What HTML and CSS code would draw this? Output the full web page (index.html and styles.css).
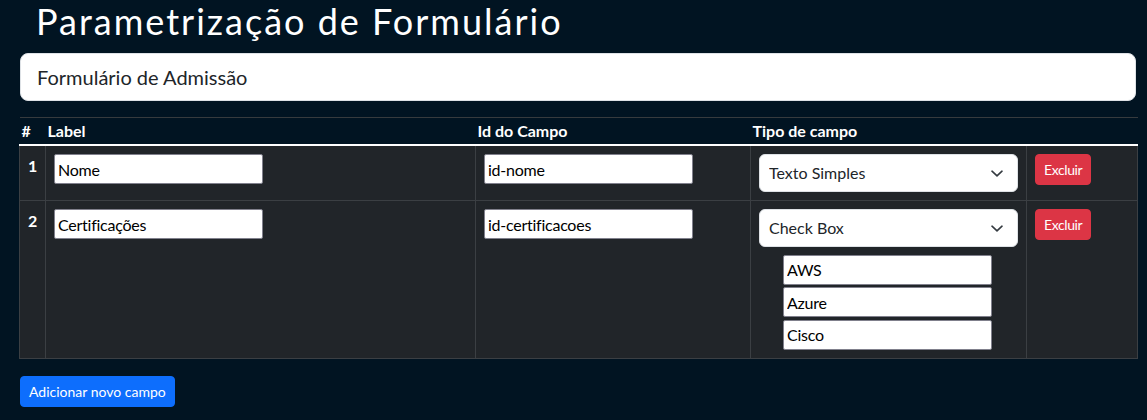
FILE: index.html
```html
<!DOCTYPE html>
<html lang="pt-BR">
<head>
<meta charset="utf-8">
<title>Parametrização de Formulário</title>
<link rel="stylesheet" href="styles.css">
</head>
<body>
<main class="page">
  <h1 class="title">Parametrização de Formulário</h1>
  <input class="form-name" type="text" value="Formulário de Admissão">
  <table class="fields">
    <colgroup>
      <col class="c-num"><col class="c-label"><col class="c-id"><col class="c-type"><col class="c-act">
    </colgroup>
    <thead>
      <tr>
        <th>#</th>
        <th>Label</th>
        <th>Id do Campo</th>
        <th>Tipo de campo</th>
        <th></th>
      </tr>
    </thead>
    <tbody>
      <tr>
        <th class="num">1</th>
        <td><input class="plain" type="text" value="Nome"></td>
        <td><input class="plain" type="text" value="id-nome"></td>
        <td>
          <div class="select-wrap">
            <select class="form-select"><option>Texto Simples</option><option>Check Box</option></select>
            <svg class="chev" width="12" height="7" viewBox="0 0 12 7"><path d="M1 1.2 6 5.8 11 1.2" fill="none" stroke="#343a40" stroke-width="1.6" stroke-linecap="round" stroke-linejoin="round"/></svg>
          </div>
        </td>
        <td><button class="btn btn-danger" type="button">Excluir</button></td>
      </tr>
      <tr>
        <th class="num">2</th>
        <td><input class="plain" type="text" value="Certificações"></td>
        <td><input class="plain" type="text" value="id-certificacoes"></td>
        <td>
          <div class="select-wrap">
            <select class="form-select"><option>Check Box</option><option>Texto Simples</option></select>
            <svg class="chev" width="12" height="7" viewBox="0 0 12 7"><path d="M1 1.2 6 5.8 11 1.2" fill="none" stroke="#343a40" stroke-width="1.6" stroke-linecap="round" stroke-linejoin="round"/></svg>
          </div>
          <div class="options">
            <input class="plain" type="text" value="AWS">
            <input class="plain" type="text" value="Azure">
            <input class="plain" type="text" value="Cisco">
          </div>
        </td>
        <td><button class="btn btn-danger" type="button">Excluir</button></td>
      </tr>
    </tbody>
  </table>
  <button class="btn btn-primary add" type="button">Adicionar novo campo</button>
</main>
</body>
</html>
```
FILE: styles.css
```css
* { box-sizing: border-box; }
html, body { margin: 0; }
body {
  background: #011422;
  color: #fff;
  font-family: Lato, "Liberation Sans", sans-serif;
  font-size: 16px;
  line-height: 1.5;
}
.page {
  padding: 0 0 0 20px;
  display: flex;
  flex-direction: column;
  align-items: flex-start;
}
.title {
  margin: 0 0 10px 0;
  padding-left: 16px;
  font-size: 36px;
  font-weight: 400;
  line-height: 43px;
  letter-spacing: 2px;
  color: #fff;
}
.form-name {
  width: 1116px;
  height: 48px;
  padding: 8px 16px;
  border: 1px solid #dee2e6;
  border-radius: 8px;
  background: #fff;
  color: #212529;
  font-family: Lato, "Liberation Sans", sans-serif;
  font-size: 20px;
  line-height: 30px;
  margin: 0 0 16px 0;
}
.fields {
  margin-left: -1px;
  width: 1118px;
  table-layout: fixed;
  border-collapse: collapse;
}
.c-num { width: 26px; }
.c-label { width: 430px; }
.c-id { width: 275px; }
.c-type { width: 276px; }
.c-act { width: 111px; }
.fields thead tr { border-top: 1px solid #373b3e; }
.fields thead th {
  text-align: left;
  font-weight: 700;
  padding: 1px 2px 1px 2px;
  line-height: 24px;
  color: #fff;
}
.fields tbody { background: #212529; }
.fields tbody th, .fields tbody td {
  border: 1px solid #3b3f43;
  padding: 8px;
  vertical-align: top;
  text-align: left;
}
.fields tbody tr:first-child > * { border-top: 2px solid #fff; }
.num { font-weight: 700; line-height: 24px; }
.plain {
  font-family: Lato, "Liberation Sans", sans-serif;
  font-size: 16px;
  line-height: 24px;
  letter-spacing: -0.25px;
  width: 209px;
  height: 30px;
  padding: 2px 3px;
  border: 1px solid #80808c;
  border-radius: 2px;
  color: #000;
  background: #fff;
  margin: 0;
}
.select-wrap { position: relative; }
.form-select {
  display: block;
  width: 100%;
  height: 38px;
  appearance: none;
  -webkit-appearance: none;
  padding: 6px 36px 6px 9px;
  font-family: Lato, "Liberation Sans", sans-serif;
  font-size: 16px;
  line-height: 24px;
  color: #212529;
  background: #fff;
  border: 1px solid #dee2e6;
  border-radius: 6px;
}
.chev {
  position: absolute;
  right: 15px;
  top: 16px;
  pointer-events: none;
}
.options {
  display: flex;
  flex-direction: column;
  gap: 2.5px;
  margin: 7.5px 0 0 24px;
}
.btn {
  font-family: Lato, "Liberation Sans", sans-serif;
  font-size: 14px;
  line-height: 21px;
  padding: 4px 8px;
  border: 1px solid transparent;
  border-radius: 4px;
  color: #fff;
  cursor: pointer;
}
.btn-danger { background: #dc3545; border-color: #dc3545; letter-spacing: -0.4px; }
.btn-primary { background: #0d6efd; border-color: #0d6efd; }
.add { margin-top: 17px; }
```
